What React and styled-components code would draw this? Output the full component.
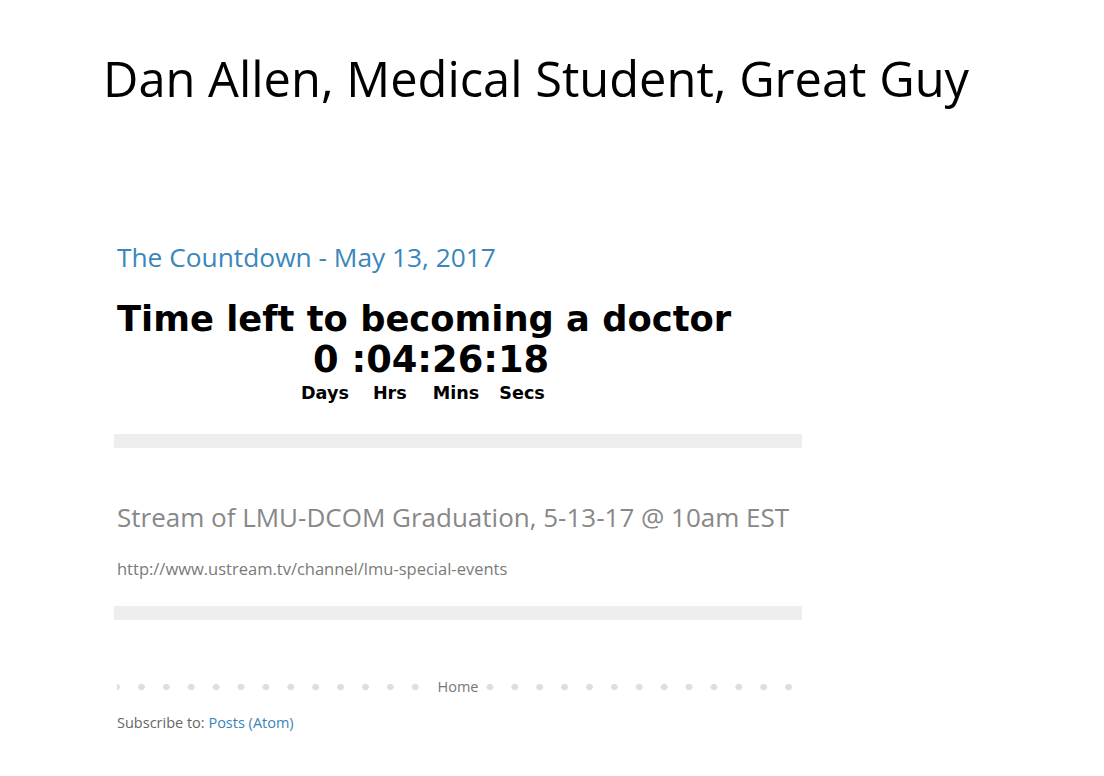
import React from "react";
import styled, { createGlobalStyle } from "styled-components";

const GlobalStyle = createGlobalStyle`
  html, body {
    margin: 0;
    padding: 0;
    background: #fff;
  }
  body {
    font-family: "Open Sans", "DejaVu Sans", sans-serif;
    color: #666;
  }
`;

const Page = styled.div`
  width: 1104px;
  min-height: 776px;
  background: #fff;
`;

const Header = styled.header`
  padding: 48px 0 0 103px;
  height: 170px;
  box-sizing: border-box;
`;

const BlogTitle = styled.h1`
  margin: 0;
  font-family: "Open Sans", sans-serif;
  font-weight: 400;
  font-size: 48.8px;
  line-height: 60px;
  color: #000;
  white-space: nowrap;
`;

const Main = styled.main`
  width: 688px;
  margin-left: 114px;
  padding-top: 69px;
`;

const Post = styled.article`
  padding: 0 3px;
`;

const PostTitle = styled.h3`
  margin: 0;
  font-family: "Open Sans", sans-serif;
  font-weight: 400;
  font-size: ${(p) => p.$size}px;
  line-height: 36px;
  color: ${(p) => p.$color};
  white-space: nowrap;
`;

const Widget = styled.div`
  font-family: "DejaVu Sans", Verdana, sans-serif;
  font-weight: 700;
  color: #000;
  padding-top: 23px;
  padding-bottom: 30px;
`;

const WidgetHeading = styled.div`
  font-size: 35.3px;
  line-height: 42px;
  white-space: nowrap;
`;

const Digits = styled.div`
  font-size: 36.8px;
  line-height: 40px;
  padding-left: 196px;
  white-space: nowrap;
`;

const Labels = styled.div`
  display: flex;
  margin-top: 2px;
  padding-left: 184px;
  font-size: 17.6px;
  line-height: 22px;
`;

const Label = styled.span`
  margin-left: ${(p) => p.$gap || 0}px;
`;

const Separator = styled.div`
  height: 14px;
  background: #eeeeee;
`;

const Spacer = styled.div`
  height: ${(p) => p.$h}px;
`;

const PostBody = styled.p`
  margin: 0;
  font-family: "Open Sans", sans-serif;
  font-size: 16.5px;
  line-height: 20px;
  color: #7a7a7a;
  padding-top: 24px;
  padding-bottom: 27px;
`;

const Pager = styled.div`
  margin: 57px 3px 0;
  height: 20px;
  display: flex;
  justify-content: center;
  align-items: center;
  background-image: radial-gradient(circle, #dedede 3px, transparent 3.6px);
  background-size: 24.9px 20px;
  background-position: 12px 0;
  background-repeat: repeat-x;
`;

const HomeLink = styled.span`
  font-family: "Open Sans", sans-serif;
  font-size: 14.5px;
  color: #777;
  background: #fff;
  padding: 0 8px;
  line-height: 20px;
`;

const Subscribe = styled.div`
  margin-top: 16px;
  padding-left: 3px;
  font-family: "Open Sans", sans-serif;
  font-size: 14.5px;
  line-height: 20px;
  color: #666;
`;

const Link = styled.a`
  color: #3a83b8;
  text-decoration: none;
`;

export default function App() {
  return (
    <Page>
      <GlobalStyle />
      <Header>
        <BlogTitle>Dan Allen, Medical Student, Great Guy</BlogTitle>
      </Header>
      <Main>
        <Post>
          <PostTitle $size={26.3} $color="#3a86bb">The Countdown - May 13, 2017</PostTitle>
          <Widget>
            <WidgetHeading>Time left to becoming a doctor</WidgetHeading>
            <Digits>0 :04:26:18</Digits>
            <Labels>
              <Label>Days</Label>
              <Label $gap={24}>Hrs</Label>
              <Label $gap={26}>Mins</Label>
              <Label $gap={20}>Secs</Label>
            </Labels>
          </Widget>
        </Post>
        <Separator />
        <Spacer $h={51} />
        <Post>
          <PostTitle $size={26} $color="#888">Stream of LMU-DCOM Graduation, 5-13-17 @ 10am EST</PostTitle>
          <PostBody>http://www.ustream.tv/channel/lmu-special-events</PostBody>
        </Post>
        <Separator />
        <Pager>
          <HomeLink>Home</HomeLink>
        </Pager>
        <Subscribe>
          Subscribe to: <Link href="#">Posts (Atom)</Link>
        </Subscribe>
      </Main>
    </Page>
  );
}
